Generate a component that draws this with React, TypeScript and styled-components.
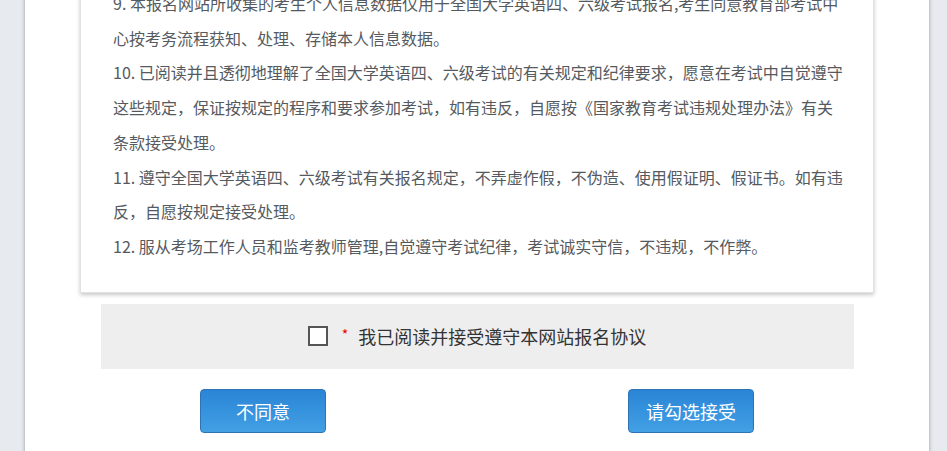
import * as React from 'react';
import styled, { createGlobalStyle } from 'styled-components';


const GlobalStyle = createGlobalStyle`
html, body {
  margin: 0;
  padding: 0;
  background: #e7ebef;
  overflow: hidden;
}
body {
  font-family: "Noto Sans CJK SC", "Noto Sans", sans-serif;
}
`;


const Page = styled.div`
  margin: -35px 18px 0 25px;
  min-height: 560px;
  background: #fff;
  box-shadow: 0 0 4px rgba(0, 0, 0, 0.35);
  padding-bottom: 40px;
`;

const Agreement = styled.div`
  margin: 0 55px;
  padding: 20px 27px 28px 32px;
  background: #fff;
  border: 1px solid #e2e2e2;
  box-shadow: 0 2px 4px rgba(0, 0, 0, 0.22);
`;

const Clause = styled.p`
  margin: 0;
  font-size: 16px;
  line-height: 34.7px;
  color: #555a60;
`;

const ConfirmBar = styled.label`
  display: flex;
  align-items: center;
  justify-content: center;
  width: 753px;
  height: 65px;
  margin: 11px auto 0;
  background: #eeeeee;
  font-size: 18px;
  color: #333;
  cursor: pointer;
`;

const Box = styled.span`
  width: 16px;
  height: 16px;
  border: 2px solid #555;
  background: #fff;
  margin-right: 14px;
`;

const Star = styled.span`
  color: #e00;
  font-size: 14px;
  margin-right: 10px;
  line-height: 1;
  position: relative;
  top: -2px;
`;

const Buttons = styled.div`
  display: flex;
  justify-content: center;
  gap: 302px;
  margin-top: 20px;
`;

const Button = styled.button`
  width: 126px;
  height: 44px;
  border: 1px solid #2f73b3;
  border-radius: 4px;
  background: linear-gradient(to bottom, #2a85d6, #42a0e4);
  color: #fff;
  font-family: "Noto Sans CJK SC", sans-serif;
  font-size: 18px;
  cursor: pointer;
`;


const clauses = [
    '9. 本报名网站所收集的考生个人信息数据仅用于全国大学英语四、六级考试报名,考生同意教育部考试中心按考务流程获知、处理、存储本人信息数据。',
    '10. 已阅读并且透彻地理解了全国大学英语四、六级考试的有关规定和纪律要求，愿意在考试中自觉遵守这些规定，保证按规定的程序和要求参加考试，如有违反，自愿按《国家教育考试违规处理办法》有关条款接受处理。',
    '11. 遵守全国大学英语四、六级考试有关报名规定，不弄虚作假，不伪造、使用假证明、假证书。如有违反，自愿按规定接受处理。',
    '12. 服从考场工作人员和监考教师管理,自觉遵守考试纪律，考试诚实守信，不违规，不作弊。',
];


export default function App() {
    return (
        <>
            <GlobalStyle />
            <Page>
                <Agreement>
                    { clauses.map((text, i) => <Clause key={i}>{text}</Clause>) }
                </Agreement>
                <ConfirmBar>
                    <Box />
                    <Star>*</Star>
                    我已阅读并接受遵守本网站报名协议
                </ConfirmBar>
                <Buttons>
                    <Button>不同意</Button>
                    <Button>请勾选接受</Button>
                </Buttons>
            </Page>
        </>
    );
}
